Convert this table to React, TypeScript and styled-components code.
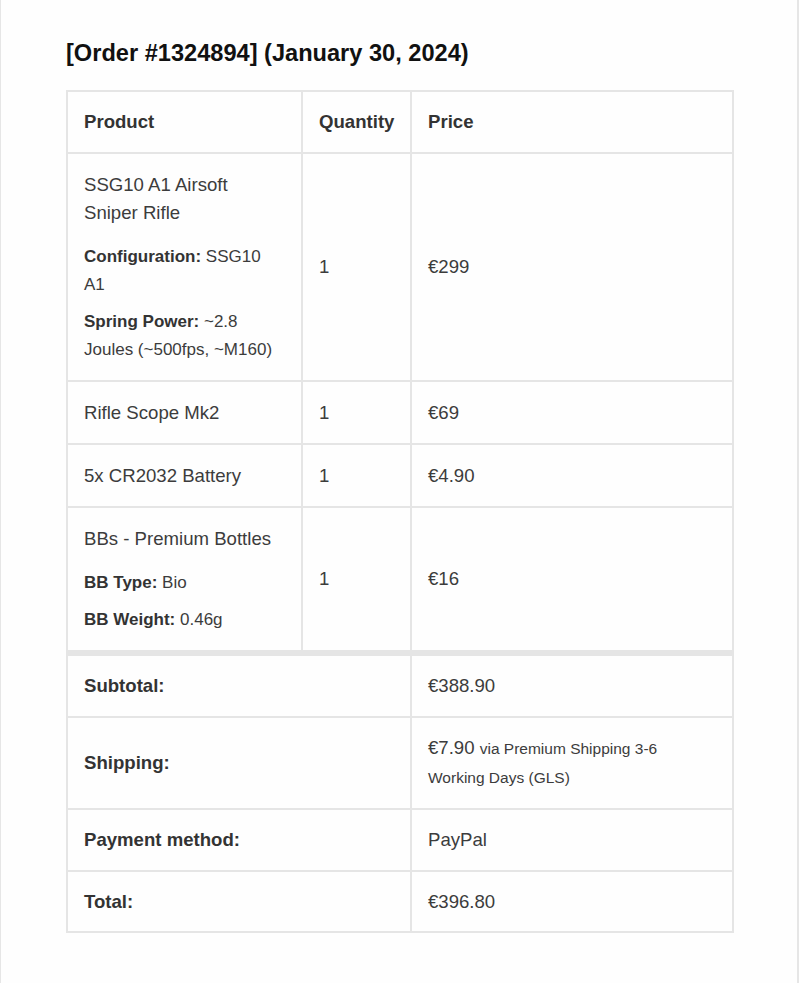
import React from "react";
import styled, { createGlobalStyle } from "styled-components";

const GlobalStyle = createGlobalStyle`
  html, body {
    margin: 0;
    padding: 0;
    background: #ffffff;
  }
  body {
    font-family: "Liberation Sans", Arial, Helvetica, sans-serif;
    color: #3c3c3c;
  }
`;

const Page = styled.div`
  box-sizing: border-box;
  width: 799px;
  min-height: 983px;
  border-left: 1px solid #e6e6e6;
  border-right: 2px solid #e6e6e6;
  background: #fefefe;
  padding: 38px 64px 48px 65px;
`;

const Heading = styled.h2`
  margin: 0 0 21px;
  font-size: 23.6px;
  line-height: 31px;
  font-weight: 700;
  color: #111111;
`;

const OrderTable = styled.table`
  width: 668px;
  table-layout: fixed;
  border-collapse: separate;
  border-spacing: 0;
  border: 1px solid #e5e5e5;
  font-size: 18.6px;
  line-height: 28px;
  color: #3c3c3c;
`;

const HeadCell = styled.th`
  border: 1px solid #e5e5e5;
  padding: 16px 16px;
  text-align: left;
  vertical-align: middle;
  font-weight: 700;
  color: #333333;
`;

const Cell = styled.td`
  border: 1px solid #e5e5e5;
  padding: 16.5px 16px;
  text-align: left;
  vertical-align: middle;
  word-wrap: break-word;
`;

const FootCell = styled.td<{ $topRule?: boolean }>`
  border: 1px solid #e5e5e5;
  border-top-width: ${(p) => (p.$topRule ? "5px" : "1px")};
  padding: 16px 16px 15.5px;
  text-align: left;
  vertical-align: middle;
`;

const FootLabel = styled(FootCell).attrs({ as: "th" })`
  font-weight: 700;
  color: #333333;
`;

const MetaList = styled.ul`
  list-style: none;
  margin: 16px 0 0;
  padding: 0;
  font-size: 17px;
  line-height: 28px;
`;

const MetaItem = styled.li`
  margin: 0;
  & + & {
    margin-top: 9px;
  }
`;

const MetaKey = styled.strong`
  font-weight: 700;
  color: #333333;
`;

const ShippedVia = styled.small`
  font-size: 15.5px;
  line-height: 29.5px;
`;

type Meta = { key: string; value: string };
type Item = { name: string; qty: number; price: string; meta?: Meta[] };

const items: Item[] = [
  {
    name: "SSG10 A1 Airsoft Sniper Rifle",
    qty: 1,
    price: "€299",
    meta: [
      { key: "Configuration:", value: "SSG10 A1" },
      { key: "Spring Power:", value: "~2.8 Joules (~500fps, ~M160)" },
    ],
  },
  { name: "Rifle Scope Mk2", qty: 1, price: "€69" },
  { name: "5x CR2032 Battery", qty: 1, price: "€4.90" },
  {
    name: "BBs - Premium Bottles",
    qty: 1,
    price: "€16",
    meta: [
      { key: "BB Type:", value: "Bio" },
      { key: "BB Weight:", value: "0.46g" },
    ],
  },
];

export default function App() {
  return (
    <>
      <GlobalStyle />
      <Page>
        <Heading>[Order #1324894] (January 30, 2024)</Heading>
        <OrderTable>
          <colgroup>
            <col style={{ width: "235px" }} />
            <col style={{ width: "109px" }} />
            <col style={{ width: "322px" }} />
          </colgroup>
          <thead>
            <tr>
              <HeadCell>Product</HeadCell>
              <HeadCell>Quantity</HeadCell>
              <HeadCell>Price</HeadCell>
            </tr>
          </thead>
          <tbody>
            {items.map((it) => (
              <tr key={it.name}>
                <Cell>
                  {it.name}
                  {it.meta && (
                    <MetaList>
                      {it.meta.map((m) => (
                        <MetaItem key={m.key}>
                          <MetaKey>{m.key}</MetaKey> {m.value}
                        </MetaItem>
                      ))}
                    </MetaList>
                  )}
                </Cell>
                <Cell>{it.qty}</Cell>
                <Cell>{it.price}</Cell>
              </tr>
            ))}
          </tbody>
          <tfoot>
            <tr>
              <FootLabel colSpan={2} $topRule>
                Subtotal:
              </FootLabel>
              <FootCell $topRule>€388.90</FootCell>
            </tr>
            <tr>
              <FootLabel colSpan={2}>Shipping:</FootLabel>
              <FootCell>
                €7.90 <ShippedVia>via Premium Shipping 3-6 Working Days (GLS)</ShippedVia>
              </FootCell>
            </tr>
            <tr>
              <FootLabel colSpan={2}>Payment method:</FootLabel>
              <FootCell>PayPal</FootCell>
            </tr>
            <tr>
              <FootLabel colSpan={2}>Total:</FootLabel>
              <FootCell>€396.80</FootCell>
            </tr>
          </tfoot>
        </OrderTable>
      </Page>
    </>
  );
}
